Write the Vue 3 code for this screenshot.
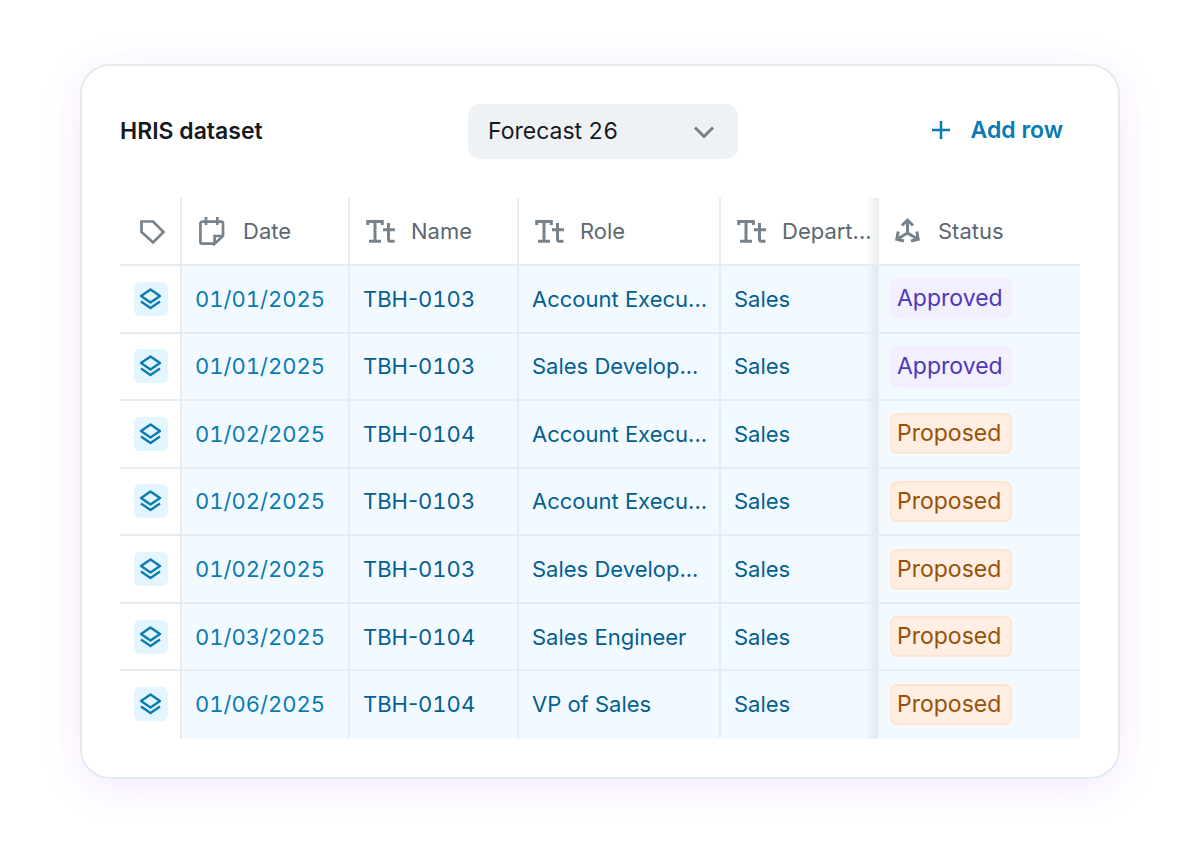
<script setup>
import { ref } from 'vue'

const forecast = ref('Forecast 26')
const textColumns = ['Name', 'Role', 'Depart...']
const rows = [
  { date: '01/01/2025', code: '0103', role: 'Account Execu...', dept: 'Sales', status: 'Approved' },
  { date: '01/01/2025', code: '0103', role: 'Sales Develop...', dept: 'Sales', status: 'Approved' },
  { date: '01/02/2025', code: '0104', role: 'Account Execu...', dept: 'Sales', status: 'Proposed' },
  { date: '01/02/2025', code: '0103', role: 'Account Execu...', dept: 'Sales', status: 'Proposed' },
  { date: '01/02/2025', code: '0103', role: 'Sales Develop...', dept: 'Sales', status: 'Proposed' },
  { date: '01/03/2025', code: '0104', role: 'Sales Engineer', dept: 'Sales', status: 'Proposed' },
  { date: '01/06/2025', code: '0104', role: 'VP of Sales', dept: 'Sales', status: 'Proposed' }
]
</script>

<template>
  <main class="page">
    <section class="card">
      <header class="toolbar">
        <h1>HRIS dataset</h1>
        <div class="picker">
          <select v-model="forecast" aria-label="Forecast">
            <option>Forecast 26</option>
          </select>
          <svg class="chevron" width="24" height="24" viewBox="0 0 24 24" aria-hidden="true">
            <path d="M3 7.5 12 16.5 21 7.5" />
          </svg>
        </div>
        <button type="button" class="add">
          <svg width="20" height="20" viewBox="0 0 20 20" aria-hidden="true">
            <path d="M10 1v18M1 10h18" />
          </svg>
          Add row
        </button>
      </header>

      <table>
        <colgroup>
          <col class="c-tag" />
          <col class="c-date" />
          <col class="c-name" />
          <col class="c-role" />
          <col class="c-dept" />
          <col class="c-status" />
        </colgroup>
        <thead>
          <tr>
            <th scope="col" class="mark" aria-label="Type">
              <svg width="28" height="28" viewBox="0 0 28 28" class="icon">
                <path d="M3.5 3.5h11.5l10.5 10.500-10.500 10.500L3.500 14z" />
              </svg>
            </th>
            <th scope="col">
              <span class="head">
                <svg width="30" height="30" viewBox="0 0 30 30" class="icon" aria-hidden="true">
                  <path d="M17.600 27.700H5.400a2 2 0 0 1-2-2V7.700a2 2 0 0 1 2-2H24a2 2 0 0 1 2 2V20L17.600 27.700V20H26M9 1v8M20.300 1v8" />
                </svg>
                Date
              </span>
            </th>
            <th v-for="label in textColumns" :key="label" scope="col" :class="{ dept: label === 'Depart...' }">
              <span class="head">
                <svg width="30" height="30" viewBox="0 0 30 30" class="icon thick" aria-hidden="true">
                  <path d="M2.700 9V5.500h14.600V9M10 5.500v20M4 25.200h12M23.500 7v16.200q0 2 2 2h4M18 13.700h12" />
                </svg>
                {{ label }}
              </span>
            </th>
            <th scope="col" class="status">
              <span class="head">
                <svg width="28" height="28" viewBox="0 0 28 28" class="icon thick" aria-hidden="true">
                  <path d="M13.500 3v13M13.500 16 3.500 22M13.500 16l10 6M8 8.500 13.500 3 19 8.500M4.200 14.500l-1.400 7.800 7.200 1.700M22.800 14.500l1.400 7.800-7.200 1.700" />
                </svg>
                Status
              </span>
            </th>
          </tr>
        </thead>
        <tbody>
          <tr v-for="(row, i) in rows" :key="i">
            <td class="mark">
              <span class="layers">
                <svg width="24" height="24" viewBox="0 0 24 24" aria-hidden="true">
                  <path d="M11.500 2.500 21 9l-9.500 6.500L2 9zM2 14.500 11.500 21l9.500-6.500" />
                </svg>
              </span>
            </td>
            <td class="date num">{{ row.date }}</td>
            <td>TBH-<span class="num">{{ row.code }}</span></td>
            <td>{{ row.role }}</td>
            <td class="dept">{{ row.dept }}</td>
            <td class="status">
              <span class="badge" :class="row.status.toLowerCase()">{{ row.status }}</span>
            </td>
          </tr>
        </tbody>
      </table>
    </section>
  </main>
</template>

<style>
body {
  margin: 0;
  background: #fff;
}
</style>

<style scoped>
.page {
  padding: 64px 80px;
  font-family: Inter, "Liberation Sans", sans-serif;
  font-size: 23px;
  line-height: 28px;
  color: #16191d;
}
.num {
  font-variant-numeric: tabular-nums;
}
.card {
  padding: 38px;
  border: 2px solid #e5eaee;
  border-radius: 30px;
  background: #fff;
  box-shadow: 0 8px 40px rgba(170, 75, 245, 0.13);
}
.toolbar {
  display: grid;
  grid-template-columns: 58fr 270px 57fr;
  align-items: center;
  margin-bottom: 39px;
}
h1 {
  margin: 0;
  padding-bottom: 1px;
  font-size: 23px;
  font-weight: 600;
  line-height: 28px;
}
.picker {
  display: grid;
  align-items: center;
}
.picker > * {
  grid-area: 1 / 1;
}
select {
  appearance: none;
  width: 100%;
  height: 55px;
  padding: 0 56px 1px 20px;
  border: 0;
  border-radius: 12px;
  background: #eef2f5;
  color: #16191d;
  font: inherit;
  font-variant-numeric: tabular-nums;
}
.chevron {
  justify-self: end;
  margin-right: 22px;
  pointer-events: none;
  fill: none;
  stroke: #77828a;
  stroke-width: 3;
}
.add {
  display: flex;
  align-items: center;
  justify-self: end;
  gap: 20px;
  padding: 0 17px 3px;
  border: 0;
  background: none;
  color: #087ab5;
  font: inherit;
  font-weight: 600;
}
.add svg {
  fill: none;
  stroke: currentColor;
  stroke-width: 2.5;
}
table {
  width: 100%;
  table-layout: fixed;
  border-spacing: 0;
  height: 541px;
  font-size: 22px;
}
.c-tag { width: 60px; }
.c-date { width: 168px; }
.c-name { width: 169px; }
.c-role { width: 202px; }
.c-dept { width: 158px; }
.c-status { width: 203px; }
th,
td {
  box-sizing: border-box;
  padding: 0 0 0 13px;
  text-align: left;
  font-weight: 400;
  white-space: nowrap;
  border-left: 2px solid #e6ecf0;
  border-bottom: 2px solid #e6ecf0;
}
tbody tr:last-child td {
  border-bottom-color: transparent;
}
th {
  height: 68px;
  padding-left: 15px;
  color: #5c6770;
}
td {
  background-color: #f2faff;
  color: #045f91;
}
td.date {
  color: #087ab5;
}
th.mark,
td.mark {
  padding: 0 0 0 2px;
  border-left: 0;
  background: none;
  text-align: center;
}
th.mark {
  padding-left: 4px;
}
.mark > * {
  vertical-align: middle;
}
.head {
  display: flex;
  align-items: center;
  gap: 16px;
}
.icon {
  flex: none;
  fill: none;
  stroke: #77828a;
  stroke-width: 2.7;
}
.thick {
  stroke-width: 3;
}
.dept {
  background-image: linear-gradient(to left, rgba(80, 95, 105, 0.1), rgba(80, 95, 105, 0));
  background-size: 12px 100%;
  background-position: right;
  background-repeat: no-repeat;
  background-origin: border-box;
}
td.status {
  padding-left: 11px;
}
.layers {
  display: inline-flex;
  align-items: center;
  justify-content: center;
  width: 34px;
  height: 34px;
  border-radius: 6px;
  background: #e3f5fe;
}
.layers svg {
  fill: none;
  stroke: #087ab5;
  stroke-width: 2.3;
  stroke-linejoin: round;
}
.badge {
  display: inline-block;
  box-sizing: border-box;
  min-width: 122px;
  padding: 4px 5px;
  border: 2px solid transparent;
  border-radius: 7px;
  font-size: 23px;
  line-height: 29px;
}
.approved {
  border-color: #f2effe;
  background: #f2effe;
  color: #4f38b5;
}
.proposed {
  border-color: #ffe5cf;
  background: #ffeee1;
  color: #985108;
}
</style>
